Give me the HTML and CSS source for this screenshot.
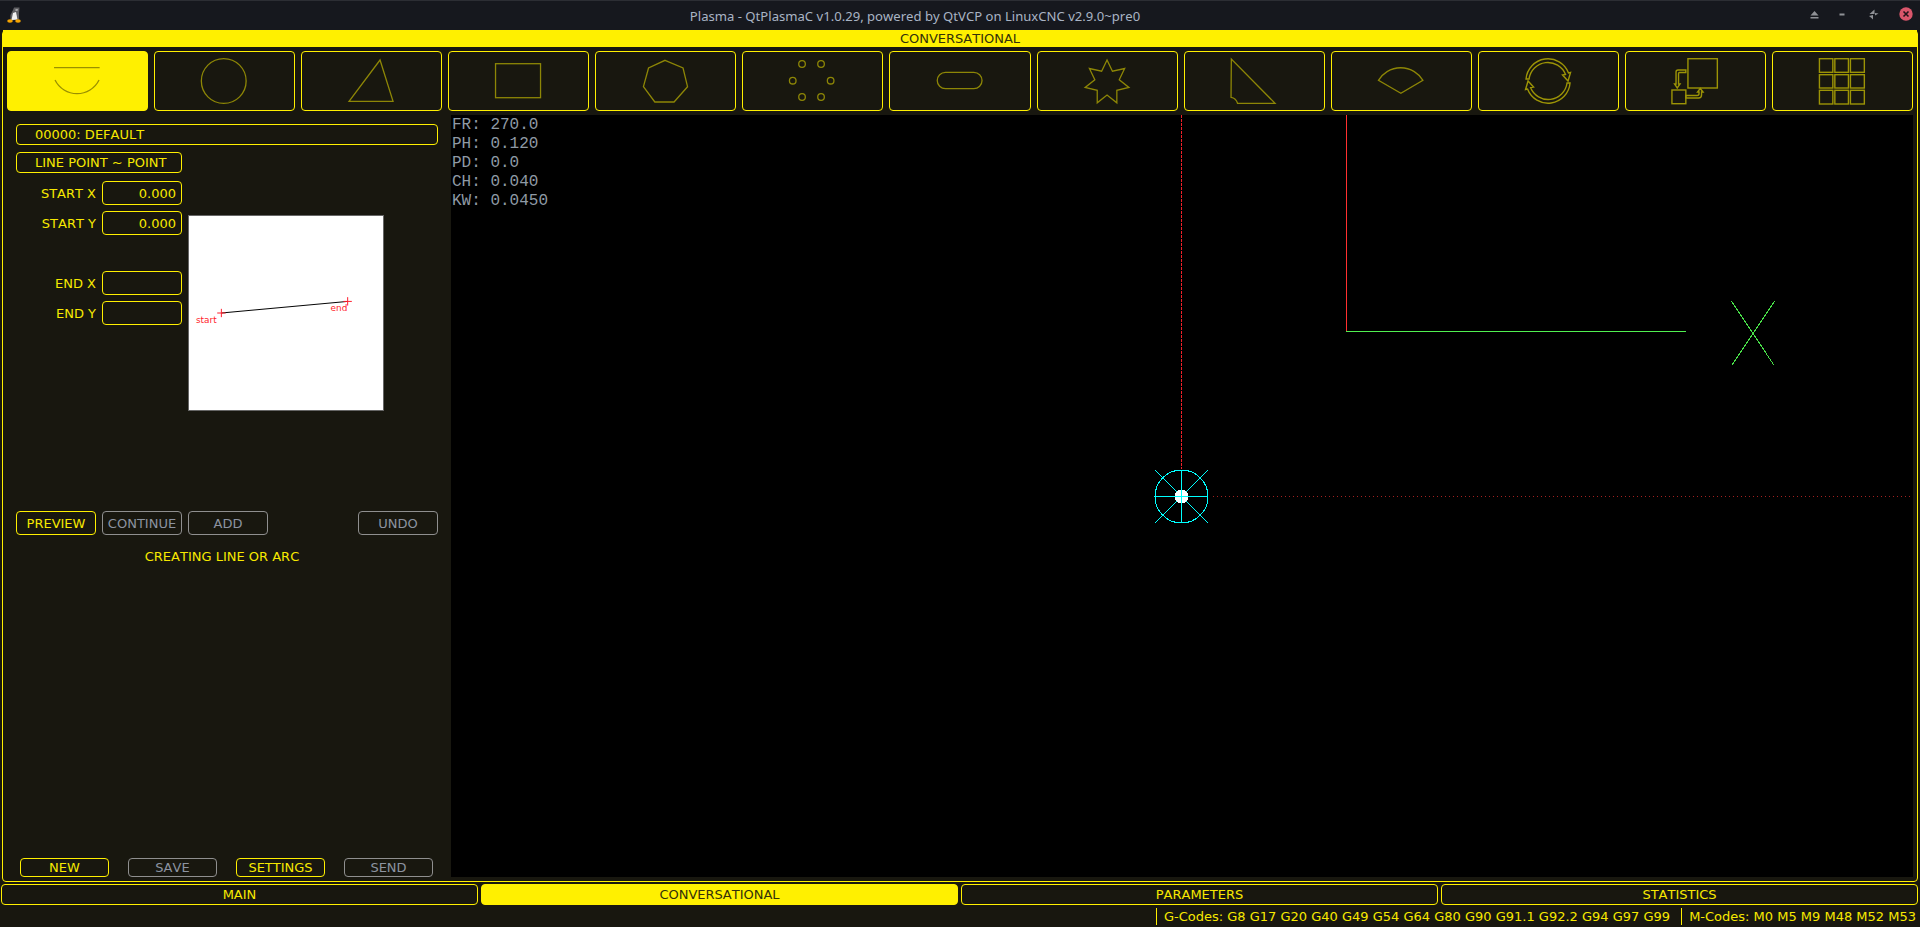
FILE: index.html
```html
<!DOCTYPE html>
<html lang="en">
<head>
    <meta charset="UTF-8">
    <meta name="viewport" content="width=device-width, initial-scale=1.0">
    <title>Plasma - QtPlasmaC</title>
    <link rel="stylesheet" href="styles.css">
</head>
<body>
    <header class="titlebar">
        <svg class="app-logo" viewBox="0 0 14 16">
            <path d="M7 0.5 L12.5 0.5 L12 6 L12 12.5 L3.5 13.5 L3.5 8 L6 3 Z" fill="#5f5f63"/>
            <path d="M6 6 L9 5 L10.5 12.5 L4.5 13 Z" fill="#f2f2f2"/>
            <path d="M8.5 2 L11 2 L10.5 4 L8.5 4 Z" fill="#a5a5a7"/>
            <ellipse cx="3" cy="14" rx="2.8" ry="1.8" fill="#f5a400"/>
            <ellipse cx="11" cy="14" rx="2.8" ry="1.8" fill="#f5a400"/>
        </svg>
        <div class="window-title">Plasma - QtPlasmaC v1.0.29, powered by QtVCP on LinuxCNC v2.9.0~pre0</div>
        <svg class="window-buttons" viewBox="0 0 120 30">
            <path d="M14.5 11 L18.5 15.5 L10.5 15.5 Z M10.5 17 H18.5 V18.5 H10.5 Z" fill="#8f9196"/>
            <rect x="39.5" y="13.5" width="5" height="2" fill="#8f9196"/>
            <path d="M74.5 9.5 V14 H69.5 Z M73 15 V19.5 L71.5 18 L69 16 Z M75 13 L78.5 13.5 L75 15.5 Z" fill="#8f9196"/>
            <circle cx="106" cy="14" r="6.7" fill="#d9566b"/>
            <path d="M103.5 11.5 L108.5 16.5 M108.5 11.5 L103.5 16.5" stroke="#23141a" stroke-width="1.6"/>
        </svg>
    </header>

    <main class="frame">
        <div class="frame-title">CONVERSATIONAL</div>

        <div class="shape-row">
            <button class="shape-btn active">
                <svg class="shape-icon" viewBox="0 0 141 60">
                    <path d="M47 16.7 H92.6"/>
                    <path d="M48 29 A24.5 24.5 0 0 0 92 29"/>
                </svg>
            </button>
            <button class="shape-btn">
                <svg class="shape-icon" viewBox="0 0 141 60"><circle cx="69.7" cy="30" r="22.4"/></svg>
            </button>
            <button class="shape-btn">
                <svg class="shape-icon" viewBox="0 0 141 60"><path d="M48 50.3 L79 9 L92 50.3 Z"/></svg>
            </button>
            <button class="shape-btn">
                <svg class="shape-icon" viewBox="0 0 141 60"><rect x="47.5" y="12.7" width="45" height="34"/></svg>
            </button>
            <button class="shape-btn">
                <svg class="shape-icon" viewBox="0 0 141 60"><path d="M70 9.3 L88 17 L92.5 35.7 L79 51 L59.8 51 L48.4 35.7 L53.5 17 Z"/></svg>
            </button>
            <button class="shape-btn">
                <svg class="shape-icon" viewBox="0 0 141 60">
                    <circle cx="60" cy="13" r="3.3"/>
                    <circle cx="79" cy="13" r="3.3"/>
                    <circle cx="50.7" cy="29.7" r="3.3"/>
                    <circle cx="88.6" cy="29.7" r="3.3"/>
                    <circle cx="60" cy="46" r="3.3"/>
                    <circle cx="79" cy="46" r="3.3"/>
                </svg>
            </button>
            <button class="shape-btn">
                <svg class="shape-icon" viewBox="0 0 141 60"><rect x="48.2" y="21.3" width="44.8" height="16.4" rx="8.2"/></svg>
            </button>
            <button class="shape-btn">
                <svg class="shape-icon" viewBox="0 0 141 60">
                    <path d="M70 9 L75.4 20.2 L87.6 17.5 L82.2 28.7 L91.9 36.5 L79.8 39.3 L79.8 51.8 L70 44 L60.2 51.8 L60.2 39.3 L48.1 36.5 L57.8 28.7 L52.4 17.5 L64.6 20.2 Z"/>
                </svg>
            </button>
            <button class="shape-btn">
                <svg class="shape-icon" viewBox="0 0 141 60"><path d="M47.3 8 L47 46.3 Q52 47 53.5 52.3 L91 52.3 Z"/></svg>
            </button>
            <button class="shape-btn">
                <svg class="shape-icon" viewBox="0 0 141 60"><path d="M69.8 42.3 L47.4 29.3 A26 26 0 0 1 91.9 29.3 Z"/></svg>
            </button>
            <button class="shape-btn">
                <svg class="shape-icon strong" viewBox="0 0 141 60">
                    <path d="M48 28 A22 22 0 0 1 90.5 22 L92.5 21.5 L90 30 L84.5 24 L87.5 23.5 A19 19 0 0 0 51 28 Z"/>
                    <path d="M92 32 A22 22 0 0 1 49.5 38 L47.5 38.5 L50 30 L55.5 36 L52.5 36.5 A19 19 0 0 0 89 32 Z"/>
                </svg>
            </button>
            <button class="shape-btn">
                <svg class="shape-icon strong" viewBox="0 0 141 60">
                    <rect x="62.9" y="7.7" width="29.4" height="29.3"/>
                    <rect x="46.9" y="39" width="13.9" height="13.7"/>
                    <path d="M60.8 19 H53 Q51 19 51 21 V33 H49.5 L52.2 37 L55 33 H53.5 V22.5 Q53.5 21.5 54.5 21.5 H60.8 Z"/>
                    <path d="M60.8 44.5 H72 Q74 44.5 74 42.5 V41 H72.5 L75.2 37.5 L78 41 H76.5 V44 Q76.5 47 73.5 47 H60.8 Z"/>
                </svg>
            </button>
            <button class="shape-btn">
                <svg class="shape-icon strong" viewBox="0 0 141 60">
                    <rect x="47.4" y="7.7" width="13.4" height="13.6"/>
                    <rect x="62.8" y="7.7" width="13.6" height="13.6"/>
                    <rect x="78.4" y="7.7" width="13.9" height="13.6"/>
                    <rect x="47.4" y="23.7" width="13.4" height="13.3"/>
                    <rect x="62.8" y="23.7" width="13.6" height="13.3"/>
                    <rect x="78.4" y="23.7" width="13.9" height="13.3"/>
                    <rect x="47.4" y="39.3" width="13.4" height="13.7"/>
                    <rect x="62.8" y="39.3" width="13.6" height="13.7"/>
                    <rect x="78.4" y="39.3" width="13.9" height="13.7"/>
                </svg>
            </button>
        </div>

        <div class="work-area">
            <section class="side-panel">
                <div class="combo combo-wide">00000: DEFAULT</div>
                <div class="combo combo-type">LINE POINT ~ POINT</div>

                <div class="form-area">
                    <div class="form-col">
                        <div class="field">
                            <label for="startX">START X</label>
                            <input type="text" id="startX" value="0.000">
                        </div>
                        <div class="field">
                            <label for="startY">START Y</label>
                            <input type="text" id="startY" value="0.000">
                        </div>
                        <div class="field field-gap">
                            <label for="endX">END X</label>
                            <input type="text" id="endX">
                        </div>
                        <div class="field">
                            <label for="endY">END Y</label>
                            <input type="text" id="endY">
                        </div>
                    </div>
                    <svg class="line-preview" viewBox="0 0 196 196">
                        <path class="preview-line" d="M32.7 98 L160.3 86.3"/>
                        <path class="preview-cross" d="M28.5 98 H37 M32.7 93.8 V102.2 M156 86.3 H164.5 M160.3 82 V90.5"/>
                        <text class="preview-text" x="7" y="107.7">start</text>
                        <text class="preview-text" x="143" y="96">end</text>
                    </svg>
                </div>

                <div class="action-row">
                    <button class="btn">PREVIEW</button>
                    <button class="btn disabled">CONTINUE</button>
                    <button class="btn disabled">ADD</button>
                    <button class="btn disabled undo">UNDO</button>
                </div>
                <div class="message">CREATING LINE OR ARC</div>

                <div class="footer-row">
                    <button class="btn small">NEW</button>
                    <button class="btn small disabled">SAVE</button>
                    <button class="btn small">SETTINGS</button>
                    <button class="btn small disabled">SEND</button>
                </div>
            </section>

            <section class="plot">
                <svg class="plot-lines" viewBox="0 0 1462 762">
                    <path class="axis-dash-v" d="M730.5 0 V354"/>
                    <path class="axis-dash-h" d="M762 381.5 H1462"/>
                    <path class="path-red" d="M895.5 0 V217"/>
                    <path class="path-green" d="M895 216.5 H1235"/>
                    <path class="path-green thin" d="M1280.3 186 L1322.7 249.7 M1323.7 186 L1281.3 249.7"/>
                    <path class="tool-mark" d="M704 355 L757 408 M757 355 L704 408"/>
                    <circle cx="730.5" cy="381.5" r="7" fill="#fff"/>
                    <circle class="tool-mark" cx="730.5" cy="381.5" r="26.5"/>
                    <path class="tool-mark" d="M704 381.5 H757 M730.5 355 V408"/>
                </svg>
                <div class="readout">
                    <div>FR: 270.0</div>
                    <div>PH: 0.120</div>
                    <div>PD: 0.0</div>
                    <div>CH: 0.040</div>
                    <div>KW: 0.0450</div>
                </div>
            </section>
        </div>
    </main>

    <nav class="tabs">
        <button class="tab">MAIN</button>
        <button class="tab active">CONVERSATIONAL</button>
        <button class="tab">PARAMETERS</button>
        <button class="tab">STATISTICS</button>
    </nav>

    <footer class="status">
        <div class="status-item">G-Codes: G8 G17 G20 G40 G49 G54 G64 G80 G90 G91.1 G92.2 G94 G97 G99</div>
        <div class="status-item">M-Codes: M0 M5 M9 M48 M52 M53</div>
    </footer>
</body>
</html>
```

FILE: styles.css
```css
* {
    box-sizing: border-box;
}

body {
    margin: 0;
    height: 927px;
    overflow: hidden;
    display: flex;
    flex-direction: column;
    background-color: #18170f;
    color: #f7e900;
    font-family: "DejaVu Sans", sans-serif;
    font-size: 13px;
    font-kerning: none;
}

button,
input {
    font-family: inherit;
    font-size: 13px;
    font-kerning: none;
    padding: 0;
}

/* window title bar */
.titlebar {
    height: 30px;
    flex: none;
    display: flex;
    align-items: center;
    background-color: #16181e;
    border-top: 1px solid #2c2e34;
}

.app-logo {
    width: 14px;
    height: 16px;
    margin: 0 9px 2px 7px;
    flex: none;
}

.window-title {
    flex: 1;
    text-align: center;
    color: #a9b4c4;
    font-family: "Noto Sans", sans-serif;
    font-size: 13.1px;
}

.window-buttons {
    width: 120px;
    height: 30px;
    margin-top: -1px;
    flex: none;
}

/* main frame */
.frame {
    height: 852px;
    flex: none;
    margin: 0 2px;
    display: flex;
    flex-direction: column;
    border: 1px solid #fff000;
    border-radius: 4px;
}

.frame-title {
    height: 17px;
    flex: none;
    margin-top: -1px;
    background-color: #fff000;
    color: #33310a;
    text-align: center;
    line-height: 17px;
}

.shape-row {
    display: flex;
    gap: 6px;
    margin-top: 4px;
    padding: 0 4px;
    flex: none;
}

.shape-btn {
    flex: 1;
    height: 60px;
    background-color: transparent;
    border: 1px solid #fff000;
    border-radius: 4px;
}

.shape-btn.active {
    background-color: #fff000;
}

.shape-icon {
    display: block;
    margin: -1px;
    width: calc(100% + 2px);
    height: calc(100% + 2px);
    fill: none;
    stroke: #8d8606;
    stroke-width: 1.3;
}

.shape-icon.strong {
    stroke: #9c9406;
    stroke-width: 1.4;
}

.shape-btn.active .shape-icon {
    stroke: #9a9000;
}

.work-area {
    flex: 1;
    display: flex;
    margin-top: 4px;
    padding: 0 4px 4px 0;
    min-height: 0;
}

/* left side panel */
.side-panel {
    width: 448px;
    flex: none;
    display: flex;
    flex-direction: column;
    padding: 9px 0 0 13px;
}

.combo {
    height: 21px;
    line-height: 19px;
    padding-left: 18px;
    border: 1px solid #fff000;
    border-radius: 4px;
}

.combo-wide {
    width: 422px;
}

.combo-type {
    width: 166px;
    margin-top: 7px;
}

.form-area {
    display: flex;
    margin-top: 8px;
}

.form-col {
    width: 166px;
    flex: none;
}

.field {
    display: flex;
    justify-content: flex-end;
    align-items: center;
    gap: 6px;
    margin-bottom: 6px;
}

.field-gap {
    margin-top: 36px;
}

.field input {
    width: 80px;
    height: 24px;
    padding-right: 5px;
    background-color: transparent;
    border: 1px solid #fff000;
    border-radius: 4px;
    color: #f7e900;
    text-align: right;
}

.line-preview {
    width: 196px;
    height: 196px;
    margin: 34px 0 0 6px;
    background-color: #fff;
    border: 1px solid #666;
    flex: none;
}

.preview-line {
    fill: none;
    stroke: #000;
    stroke-width: 1;
}

.preview-cross {
    fill: none;
    stroke: #ff1c2c;
    stroke-width: 1;
}

.preview-text {
    fill: #ff1c2c;
    font-family: "DejaVu Sans", sans-serif;
    font-size: 9px;
}

.btn {
    width: 80px;
    height: 24px;
    background-color: transparent;
    border: 1px solid #fff000;
    border-radius: 4px;
    color: #f7e900;
}

.btn.disabled {
    border-color: #8f8f8f;
    color: #8c93a0;
}

.btn.small {
    width: 89px;
    height: 19px;
    line-height: 16px;
}

.action-row {
    width: 422px;
    display: flex;
    gap: 6px;
    margin-top: 100px;
}

.undo {
    margin-left: auto;
}

.message {
    width: 412px;
    margin-top: 11px;
    line-height: 21px;
    text-align: center;
}

.footer-row {
    width: 413px;
    display: flex;
    justify-content: space-between;
    margin-top: auto;
    margin-left: 4px;
}

/* plot canvas */
.plot {
    flex: 1;
    position: relative;
    background-color: #000;
}

.plot-lines {
    display: block;
    width: 100%;
    height: 100%;
    fill: none;
    shape-rendering: crispEdges;
}

.axis-dash-v {
    stroke: #f02028;
    stroke-dasharray: 3 1;
}

.axis-dash-h {
    stroke: #a02020;
    stroke-dasharray: 1 3;
}

.path-red {
    stroke: #ff3030;
}

.path-green {
    stroke: #50f050;
}

.path-green.thin {
    stroke: #48e048;
}

.tool-mark {
    stroke: #00ffff;
    fill: none;
}

.readout {
    position: absolute;
    top: 1px;
    left: 1px;
    color: #8f9aa5;
    font-family: "Liberation Mono", monospace;
    font-size: 16px;
    line-height: 19px;
}

/* bottom tabs */
.tabs {
    display: grid;
    grid-template-columns: repeat(4, 477px);
    gap: 3px;
    height: 21px;
    flex: none;
    margin-top: 2px;
    padding-left: 1px;
}

.tab {
    background-color: transparent;
    border: 1px solid #fff000;
    border-radius: 4px;
    color: #f7e900;
}

.tab.active {
    background-color: #fff000;
    color: #33310a;
}

.status {
    flex: 1;
    display: flex;
    justify-content: flex-end;
    align-items: center;
    gap: 11px;
    padding-right: 4px;
}

.status-item {
    height: 17px;
    line-height: 17px;
    padding-left: 7px;
    border-left: 1px solid #fff000;
}
```
